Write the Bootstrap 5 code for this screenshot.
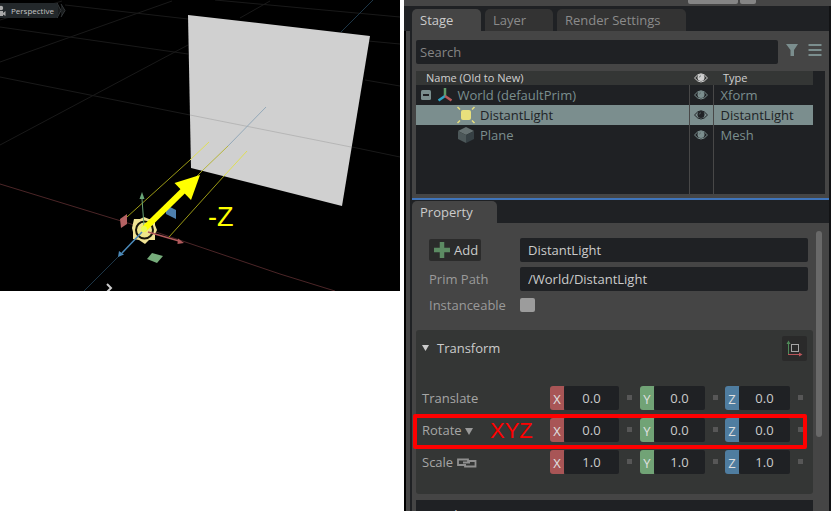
<!DOCTYPE html>
<html lang="en">
<head>
<meta charset="utf-8">
<meta name="viewport" content="width=device-width, initial-scale=1">
<title>Stage editor</title>
<link href="https://cdn.jsdelivr.net/npm/bootstrap@5.3.0/dist/css/bootstrap.min.css" rel="stylesheet">
<style>
:root{--panel:#454545;--ink:#1f2124;--card:#343635;--teal:#7b8e8e;--txt:#cbcbcb;--dim:#9a9a9a}
body{background:#fff;font-family:"Open Sans","Noto Sans",sans-serif;font-size:13px;line-height:18px;color:var(--txt)}
.workspace{display:grid;grid-template-columns:400fr 427fr;column-gap:4px;height:100vh;overflow:hidden}
.scene-view{width:100%}
.camera-chip{top:3px;left:0;height:15px;padding:0 4px 0 0;background:#23282b;color:#c4c4c4;font-size:8px;line-height:15px;border:0;border-radius:0 3px 3px 0;gap:4px}
.topbar{height:6px;background:var(--panel);padding-right:75px;gap:2px}
.topbar span{height:4px;background:#858585;border-radius:0 0 2px 2px;width:16px}
.topbar span:first-child{width:50px}
.edge{width:8px}
.edge-cap{height:25px;background:var(--ink)}
.edge-rail{background:var(--panel);border-left:2px solid #000;border-right:2px solid var(--ink)}
.dock{background:var(--panel);border-right:2px solid #111214;min-width:0}
.tabstrip{background:var(--ink);height:25px;gap:4px}
.tabstrip-low{height:23px}
.dock-tab{height:22px;padding:0 8px;border:0;border-radius:5px 5px 0 0;background:#333;color:#8b8b8b;text-align:left}
.dock-tab.current{background:var(--panel);color:var(--txt)}
.tab-s{width:69px}.tab-l{width:68px}.tab-r{width:129px}.tab-p{width:85px}
.searchbar{padding:9px 6px 7px 4px}
.dark-field{background:var(--ink);border:0;border-radius:2px;height:24px;color:var(--txt);min-width:0;outline:0}
.search-box{padding:0 4px;margin-right:7px}
.search-box::placeholder{color:#858585;opacity:1}
.icon-btn{background:none;border:0;padding:0;line-height:0}
.tree{background:var(--ink);margin:0 4px;padding-right:12px;height:123px}
.tree table{table-layout:fixed;color:var(--teal)}
.tree th{font-weight:400;font-size:11px;line-height:14px;height:14px;background:var(--card);color:#d0d0d0;padding:0 10px}
.tree td{height:20px;line-height:20px;padding:0 7px;white-space:nowrap}
.tree td+td{border-left:1px solid #484848}
.tree th.eye,.tree td.eye{width:24px;padding:0;text-align:center;line-height:0}
.tree .type{width:100px}
.tree .picked td{background:var(--teal);color:#202326}
.tree .rest td{height:49px}
.tree svg{display:inline-block;vertical-align:middle}
.tree td:first-child{padding-left:4px}
.tree td.kid{padding-left:40px}
.splitter{height:2px;background:#3f74ba;margin-top:4px}
.props{padding:15px 16px 0 4px}
.info{display:grid;grid-template-columns:91px 1fr;row-gap:5px;padding:0 5px 0 13px;align-items:center;color:var(--dim)}
.info .dark-field{padding:0 8px}
.add-btn{height:22px;width:52px;background:#2b2b2b;border:0;border-radius:2px;color:var(--txt);padding:0 5px;gap:4px}
.inst{appearance:none;width:15px;height:14px;background:#9c9c9c;border-radius:2px}
.card-box{background:var(--card);border-radius:3px;margin-top:16px;padding:6px 0 12px 6px}
.box-head{padding-right:6px;gap:8px;margin-bottom:25px}
.box-head h2,.next-box h2{font-size:13px;line-height:18px;font-weight:400}
.axes-btn{width:25px;height:25px;background:#2a2a2a;border:0;border-radius:2px;padding:0}
.vec{display:grid;grid-template-columns:128px 69fr 21px 65fr 20px 65fr 23px;margin-bottom:8px;align-items:center;color:#a6a6a6}
.axis{width:14px;height:24px;line-height:26px;text-align:center;color:#e0e0e0;border-radius:3px 0 0 3px;flex-shrink:0}
.ax-x{background:#a85556}.ax-y{background:#71a376}.ax-z{background:#4f7da0}
.vec input{text-align:center;padding:0}
.keydot{width:5px;height:5px;background:#575757;margin-left:8px;border:0;padding:0}
.callout{top:-4px;bottom:-7px;left:-9px;right:6px;border:4px solid #f00;border-radius:2px;pointer-events:none}
.callout-text{left:68px;top:1px;font:22px/24px "Liberation Sans",Arial,sans-serif;color:#f00}
.mode-btn{background:none;border:0;padding:0;color:#a6a6a6}
.next-box{background:var(--ink);margin-top:6px;padding:6px 6px;gap:8px;height:30px}
.scroller{top:8px;right:7px;width:6px;height:206px;background:#696969;border-radius:3px}
</style>
<script src="https://cdn.jsdelivr.net/npm/bootstrap@5.3.0/dist/js/bootstrap.bundle.min.js"></script>
</head>
<body>
<svg class="d-none" aria-hidden="true">
  <symbol id="eye" viewBox="0 0 14 10"><path d="M.5 5Q7-3.500 13.500 5Q7 13 .5 5Z" fill="none" stroke="currentColor"/><circle cx="7" cy="4.500" r="3.500" fill="currentColor"/><path d="M5.300 4.500Q5.500 2.800 7 2.800" fill="none" stroke="#5b6666" stroke-width=".8"/></symbol>
</svg>
<main class="workspace">
  <section class="position-relative">
    <svg class="scene-view d-block" viewBox="0 0 400 291" role="img" aria-label="Distant light aimed at a plane">
      <rect width="400" height="291" fill="#000"/>
      <g stroke="#191919" fill="none"><path d="M0 27L188 54M0 77L190 115M0 62L172 1M0 145L188 45M65 5L188 19M0 20L62 1M215 0L400 17M240 18L270 1M368 41L400 44M365 80L400 86M352 147L400 157"/></g>
      <path d="M0 184L144 228L280 274L335 291" fill="none" stroke="#4b2527"/>
      <path d="M84 291L145 230M341 32L373 0" stroke="#1d3647"/>
      <path d="M188 15L370 36L342 206L191 168Z" fill="#d0d0d0"/>
      <path d="M190 115L351 147" stroke="#b6b6b6"/>
      <path d="M228 146L266 107" stroke="#93a8b8"/>
      <path d="M127 217L190 160M169 237L224 176M145 230L202 171" stroke="#9b9a15"/>
      <path d="M190 160L209 142M224 176L247 151" stroke="#dfdf55"/>
      <path d="M202 171L228 146" stroke="#b5b53b"/>
      <path d="M120 219L127 214L127 224L121 228Z" fill="#b56263"/>
      <path d="M166 211L170 207L176 210L176 219L166 214Z" fill="#4d7fad"/>
      <path d="M147 259L152 253L163 256L157 263Z" fill="#76ac7b"/>
      <path d="M144 217L149 219L155 219L155 225L157 230L155 234L155 240L149 240L145 244L139 240L133 239L133 232L132 228L134 219L140 219Z" fill="#f0e394"/>
      <circle cx="144.500" cy="230" r="8.500" fill="#efe58a" stroke="#171509" stroke-width="2"/>
      <path d="M144 226L142 199" stroke="#69a577"/><path d="M142 192L144.500 199H139.500Z" fill="#69a577"/>
      <path d="M148 232L179 241" stroke="#b25a5c" stroke-width="1.500"/><path d="M178 238.500L184 243L177.500 244Z" fill="#b25a5c"/>
      <path d="M142 232L122 253" stroke="#4b89b8" stroke-width="1.500"/><path d="M118 257L119 251L124 254.500Z" fill="#4b89b8"/>
      <path d="M143 230L185 189" stroke="#ff0" stroke-width="6"/>
      <circle cx="144" cy="229" r="3" fill="#e9f95a"/>
      <path d="M200 175L174.500 183L191 200Z" fill="#ff0"/>
      <text x="208" y="226" font-family="Liberation Sans, Arial, sans-serif" font-size="27" fill="#ff0">-Z</text>
      <path d="M107 284L111 288L107 292" fill="none" stroke="#ccc" stroke-width="2"/>
      <path d="M57 3L61 10.500L57 18V3ZM61 4L65 10.500L61 17" fill="#191c1d" stroke="#34383a"/>
    </svg>
    <button class="camera-chip position-absolute d-flex align-items-center" type="button">
      <svg width="7" height="12" viewBox="0 0 7 12" aria-hidden="true"><circle cx="1" cy="3" r="2.200" fill="#aaa"/><path d="M0 6H3V8L5.500 6V11L3 9.500V11H0Z" fill="#aaa"/></svg>Perspective
    </button>
  </section>

  <section class="d-flex flex-column overflow-hidden">
    <div class="topbar d-flex justify-content-end"><span></span><span></span></div>
    <div class="d-flex flex-fill overflow-hidden">
      <div class="edge d-flex flex-column flex-shrink-0"><div class="edge-cap"></div><div class="edge-rail flex-fill"></div></div>
      <div class="dock flex-fill">
        <div class="tabstrip d-flex align-items-end" role="tablist">
          <button class="dock-tab tab-s current" role="tab" type="button">Stage</button>
          <button class="dock-tab tab-l" role="tab" type="button">Layer</button>
          <button class="dock-tab tab-r text-nowrap" role="tab" type="button">Render Settings</button>
        </div>
        <div class="searchbar d-flex">
          <input class="dark-field search-box flex-fill" type="text" placeholder="Search" aria-label="Search">
          <button class="icon-btn" type="button" aria-label="Filter"><svg class="d-block mb-1" width="14" height="14" viewBox="0 0 14 14"><path d="M1 1H13L9 7V13H5.500V7Z" fill="#7b8e8e"/></svg></button>
          <button class="icon-btn ms-2" type="button" aria-label="Options"><svg class="d-block mb-1" width="16" height="14" viewBox="0 0 16 14"><path d="M1.500 2H14.500M1.500 7H14.500M1.500 12H14.500" stroke="#7b8e8e" stroke-width="2"/></svg></button>
        </div>
        <div class="tree">
          <table class="w-100">
            <thead><tr><th>Name (Old to New)</th><th class="eye" aria-label="Visibility"><svg width="14" height="10"><use href="#eye"/></svg></th><th class="type">Type</th></tr></thead>
            <tbody>
              <tr><td><svg class="align-top" width="12" height="20" viewBox="0 0 12 20"><rect x="1" y="5" width="10" height="10" rx="1.500" fill="#7b8e8e"/><path d="M3 10H9" stroke="#1f2124" stroke-width="2"/></svg>
                <svg class="align-top me-1" width="18" height="20" viewBox="-2 -2 18 20"><path d="M8 9V1" stroke="#5f9a68" stroke-width="2.500"/><path d="M8 9L1.500 13.500" stroke="#2fa3c4" stroke-width="2.500"/><path d="M8 9L14.500 13.500" stroke="#b85858" stroke-width="2.500"/></svg>World (defaultPrim)</td><td class="eye"><svg width="14" height="10"><use href="#eye"/></svg></td><td>Xform</td></tr>
              <tr class="picked"><td class="kid"><svg width="20" height="20" viewBox="0 0 20 20" class="align-top me-1"><rect x="5" y="5" width="10" height="10" rx="2" fill="#e8df7c"/><path d="M1.500 2L4 4.500M18.500 2L16 4.500M1.500 18L4 15.500M18.500 18L16 15.500" stroke="#e8df7c" stroke-width="1.500"/></svg>DistantLight</td><td class="eye"><svg width="14" height="10"><use href="#eye"/></svg></td><td>DistantLight</td></tr>
              <tr><td class="kid"><svg width="20" height="20" viewBox="0 0 20 20" class="align-top me-1"><path d="M10 2L18 6L10 10L2 6Z" fill="#657071"/><path d="M2 6L10 10V18L2 14Z" fill="#4c5759"/><path d="M18 6L10 10V18L18 14Z" fill="#364044"/></svg>Plane</td><td class="eye"><svg width="14" height="10"><use href="#eye"/></svg></td><td>Mesh</td></tr>
              <tr class="rest"><td></td><td></td><td></td></tr>
            </tbody>
          </table>
        </div>
        <div class="splitter"></div>
        <div class="tabstrip tabstrip-low d-flex align-items-end" role="tablist">
          <button class="dock-tab tab-p current" role="tab" type="button">Property</button>
        </div>
        <div class="props position-relative">
          <div class="info">
            <button class="add-btn d-flex align-items-center" type="button"><svg width="16" height="16" viewBox="0 0 16 16" class="flex-shrink-0"><path d="M8 0V16M0 8H16" stroke="#5c8b63" stroke-width="4.500"/></svg>Add</button>
            <input class="dark-field" type="text" value="DistantLight" aria-label="Prim name">
            <label for="path">Prim Path</label><input class="dark-field" id="path" type="text" value="/World/DistantLight">
            <label for="inst" class="text-nowrap">Instanceable</label><input class="inst" id="inst" type="checkbox">
          </div>
          <div class="card-box">
            <div class="box-head d-flex align-items-center">
              <svg width="7" height="6" viewBox="0 0 7 6" aria-hidden="true"><path d="M0 0H7L3.500 6Z" fill="#ccc"/></svg>
              <h2 class="m-0 flex-fill">Transform</h2>
              <button class="axes-btn" type="button" aria-label="Toggle offset mode"><svg class="d-block" width="25" height="25" viewBox="0 0 25 25"><path d="M6.500 19V7" stroke="#4f8a58"/><path d="M4.500 8L6.500 4.500L8.500 8Z" fill="#4f8a58"/><path d="M6 18.500H18" stroke="#b8555a"/><path d="M17 16.500L20.500 18.500L17 20.500Z" fill="#b8555a"/><rect x="9.500" y="8.500" width="7" height="7" fill="none" stroke="#a5a5a5"/></svg></button>
            </div>
            <div class="vec"><span>Translate</span>
              <div class="d-flex"><span class="axis ax-x">X</span><input class="dark-field w-100" type="text" value="0.0" aria-label="Translate X"></div><button class="keydot" type="button" aria-label="Reset"></button>
              <div class="d-flex"><span class="axis ax-y">Y</span><input class="dark-field w-100" type="text" value="0.0" aria-label="Translate Y"></div><button class="keydot" type="button" aria-label="Reset"></button>
              <div class="d-flex"><span class="axis ax-z">Z</span><input class="dark-field w-100" type="text" value="0.0" aria-label="Translate Z"></div><button class="keydot" type="button" aria-label="Reset"></button>
            </div>
            <div class="vec position-relative"><button class="mode-btn text-start" type="button">Rotate <svg width="8" height="7" viewBox="0 0 8 7"><path d="M0 0H8L4 7Z" fill="#999"/></svg></button>
              <div class="d-flex"><span class="axis ax-x">X</span><input class="dark-field w-100" type="text" value="0.0" aria-label="Rotate X"></div><button class="keydot" type="button" aria-label="Reset"></button>
              <div class="d-flex"><span class="axis ax-y">Y</span><input class="dark-field w-100" type="text" value="0.0" aria-label="Rotate Y"></div><button class="keydot" type="button" aria-label="Reset"></button>
              <div class="d-flex"><span class="axis ax-z">Z</span><input class="dark-field w-100" type="text" value="0.0" aria-label="Rotate Z"></div><button class="keydot" type="button" aria-label="Reset"></button>
              <div class="callout position-absolute"></div><span class="callout-text position-absolute">XYZ</span>
            </div>
            <div class="vec"><span>Scale <svg width="20" height="10" viewBox="0 0 20 10"><path d="M9 7H1V1.500H11V4M11 3H18.500V8.500H8V6M6 4.500H13" fill="none" stroke="#909090" stroke-width="1.800"/></svg></span>
              <div class="d-flex"><span class="axis ax-x">X</span><input class="dark-field w-100" type="text" value="1.0" aria-label="Scale X"></div><button class="keydot" type="button" aria-label="Reset"></button>
              <div class="d-flex"><span class="axis ax-y">Y</span><input class="dark-field w-100" type="text" value="1.0" aria-label="Scale Y"></div><button class="keydot" type="button" aria-label="Reset"></button>
              <div class="d-flex"><span class="axis ax-z">Z</span><input class="dark-field w-100" type="text" value="1.0" aria-label="Scale Z"></div><button class="keydot" type="button" aria-label="Reset"></button>
            </div>
          </div>
          <div class="next-box d-flex"><svg class="mt-1" width="7" height="6" viewBox="0 0 7 6" aria-hidden="true"><path d="M0 2H7L3.500 6Z" fill="#ccc"/></svg><h2 class="m-0">Light</h2></div>
          <div class="scroller position-absolute"></div>
        </div>
      </div>
    </div>
  </section>
</main>
</body>
</html>
